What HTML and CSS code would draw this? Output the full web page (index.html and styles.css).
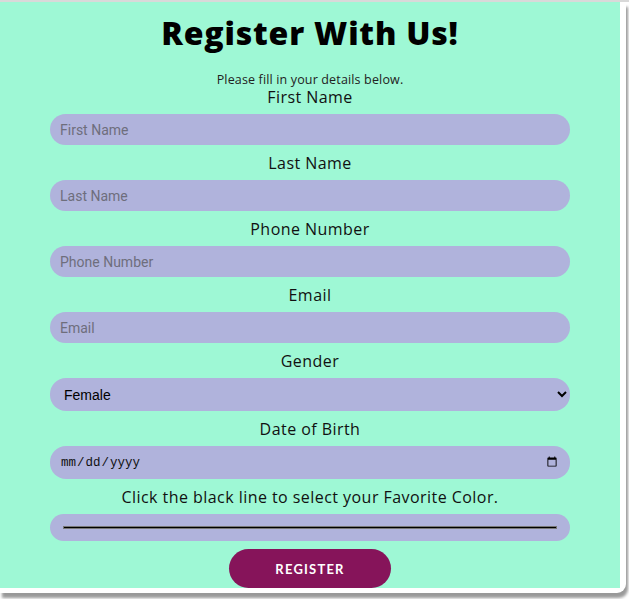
FILE: index.html
```html
<!DOCTYPE html>
<html lang="en">
<head>
<meta charset="utf-8">
<title>Register With Us!</title>
<link rel="stylesheet" href="styles.css">
</head>
<body>
<div class="card">
  <form class="panel">
    <h1 class="title">Register With Us!</h1>
    <p class="intro">Please fill in your details below.</p>
    <label class="field"><span class="label">First Name</span><input class="control" type="text" placeholder="First Name"></label>
    <label class="field"><span class="label">Last Name</span><input class="control" type="text" placeholder="Last Name"></label>
    <label class="field"><span class="label">Phone Number</span><input class="control" type="tel" placeholder="Phone Number"></label>
    <label class="field"><span class="label">Email</span><input class="control" type="email" placeholder="Email"></label>
    <label class="field"><span class="label">Gender</span>
      <select class="control select"><option>Female</option><option>Male</option><option>Other</option></select>
    </label>
    <label class="field"><span class="label">Date of Birth</span><input class="control date" type="date"></label>
    <label class="field"><span class="label">Click the black line to select your Favorite Color.</span><input class="control color" type="color" value="#000000"></label>
    <button class="submit" type="button">REGISTER</button>
  </form>
</div>
</body>
</html>
```
FILE: styles.css
```css
html, body {
  margin: 0;
  padding: 0;
}
body {
  background: #ffffff;
  border-top: 2px solid #d9d9d9;
  height: 597px;
  overflow: hidden;
}
.card {
  width: 620px;
  background: #ffffff;
  padding: 0 6px 5px 0;
  border-radius: 0 0 9px 0;
  box-shadow: 2px 5px 3px rgba(0, 0, 0, 0.4);
}
.panel {
  width: 620px;
  height: 586px;
  background: #9ef8d5;
  display: flex;
  flex-direction: column;
  align-items: center;
  font-family: "Open Sans", "Noto Sans", sans-serif;
  color: #111;
}
.title {
  margin: 11px 0 0;
  font-size: 32px;
  line-height: 40px;
  font-weight: 800;
  letter-spacing: 0.8px;
  color: #000;
}
.intro {
  margin: 19px 0 0;
  font-size: 12.5px;
  line-height: 15px;
  letter-spacing: 0.15px;
  color: #222;
}
.field {
  display: flex;
  flex-direction: column;
  align-items: center;
  width: 520px;
  margin-bottom: 8px;
}
.label {
  font-size: 16px;
  line-height: 20px;
  letter-spacing: 0.45px;
  margin-bottom: 7px;
}
.control {
  box-sizing: border-box;
  width: 520px;
  height: 31px;
  border: none;
  border-radius: 16px;
  background: #b0b3dc;
  padding: 0 10px;
  font-family: Roboto, Arial, sans-serif;
  font-size: 14px;
  color: #111;
  outline: none;
}
.control::placeholder {
  color: #6e6e7c;
}
.select {
  height: 33px;
  padding: 0 8px 0 10px;
  font-family: Arial, "Liberation Sans", sans-serif;
  color: #000;
}
.date {
  height: 33px;
  font-family: "Liberation Mono", monospace;
  font-size: 12.5px;
}
.color {
  height: 27px;
  padding: 0;
  cursor: pointer;
  -webkit-appearance: none;
  appearance: none;
}
.color::-webkit-color-swatch-wrapper {
  padding: 12px 13px;
}
.color::-webkit-color-swatch {
  border: 1px solid #777;
  border-radius: 0;
}
.submit {
  width: 162px;
  height: 39px;
  border: none;
  border-radius: 20px;
  background: #86145a;
  color: #fff;
  font-family: Lato, "Open Sans", sans-serif;
  font-weight: 700;
  font-size: 13px;
  letter-spacing: 1.2px;
  cursor: pointer;
}
```
